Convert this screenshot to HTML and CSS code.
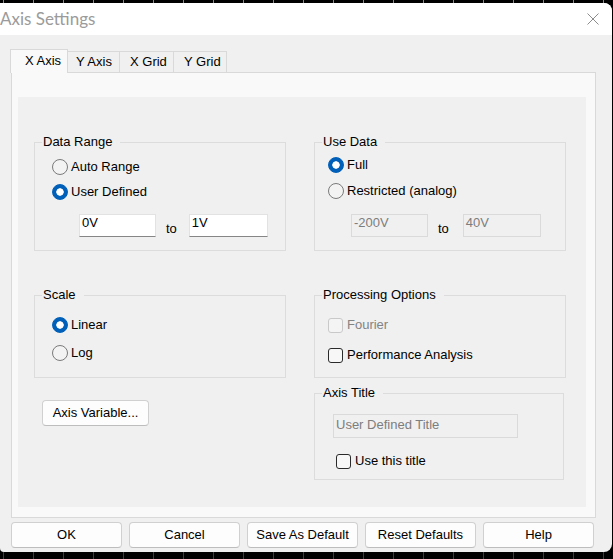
FILE: index.html
```html
<!DOCTYPE html>
<html lang="en">
<head>
<meta charset="utf-8">
<title>Axis Settings</title>
<link rel="stylesheet" href="styles.css">
</head>
<body>
<div class="desktop">
  <div class="window">
    <div class="titlebar">
      <span class="title">Axis Settings</span>
      <svg class="close" width="12" height="12" viewBox="0 0 12 12" aria-label="Close">
        <path d="M0.5 0.5 L11.5 11.5 M11.5 0.5 L0.5 11.5" stroke="#8c8c8c" stroke-width="1" fill="none"/>
      </svg>
    </div>
    <div class="client">
      <div class="tabs">
        <div class="tab tab-active tab-1">X Axis</div>
        <div class="tab tab-2">Y Axis</div>
        <div class="tab tab-3">X Grid</div>
        <div class="tab tab-4">Y Grid</div>
      </div>
      <div class="panel">
        <div class="page">
          <fieldset class="group group-range">
            <legend>Data Range</legend>
            <div class="opts">
              <div class="opt"><span class="radio"></span>Auto Range</div>
              <div class="opt"><span class="radio radio-on"></span>User Defined</div>
            </div>
            <div class="range">
              <div class="textbox tb-a">0V</div>
              <span class="to">to</span>
              <div class="textbox tb-b">1V</div>
            </div>
          </fieldset>

          <fieldset class="group group-use">
            <legend>Use Data</legend>
            <div class="opts">
              <div class="opt"><span class="radio radio-on"></span>Full</div>
              <div class="opt"><span class="radio"></span>Restricted (analog)</div>
            </div>
            <div class="range">
              <div class="textbox textbox-off tb-a">-200V</div>
              <span class="to">to</span>
              <div class="textbox textbox-off tb-b">40V</div>
            </div>
          </fieldset>

          <fieldset class="group group-scale">
            <legend>Scale</legend>
            <div class="opts">
              <div class="opt"><span class="radio radio-on"></span>Linear</div>
              <div class="opt"><span class="radio"></span>Log</div>
            </div>
          </fieldset>

          <fieldset class="group group-proc">
            <legend>Processing Options</legend>
            <div class="opts">
              <div class="opt opt-off"><span class="check check-off"></span>Fourier</div>
              <div class="opt"><span class="check"></span>Performance Analysis</div>
            </div>
          </fieldset>

          <button class="btn btn-axisvar" type="button">Axis Variable...</button>

          <fieldset class="group group-title">
            <legend>Axis Title</legend>
            <div class="textbox textbox-off tb-title">User Defined Title</div>
            <div class="opt opt-title"><span class="check"></span>Use this title</div>
          </fieldset>
        </div>
      </div>
      <div class="buttons">
        <button class="btn" type="button">OK</button>
        <button class="btn" type="button">Cancel</button>
        <button class="btn" type="button">Save As Default</button>
        <button class="btn" type="button">Reset Defaults</button>
        <button class="btn" type="button">Help</button>
      </div>
    </div>
  </div>
</div>
</body>
</html>
```

FILE: styles.css
```css
html, body {
  margin: 0;
  padding: 0;
  background: #000;
}

body {
  font-family: "Liberation Sans", Arial, sans-serif;
  font-size: 13px;
  color: #000;
}

.desktop {
  width: 613px;
  height: 559px;
  box-sizing: border-box;
  padding-top: 3px;
  overflow: hidden;
  background:
    linear-gradient(to right, transparent 3px, #8a8a8a 3px, #8a8a8a 4px, transparent 4px) 0 0 / 30px 3px repeat-x,
    linear-gradient(to right, transparent 3px, #3c3c3c 3px, #3c3c3c 4px, transparent 4px) 0 100% / 30px 7px repeat-x,
    #000;
}

.window {
  width: 612px;
  height: 549px;
  background: #f0f0f0;
  border-radius: 0 8px 8px 4px;
  overflow: hidden;
  display: flex;
  flex-direction: column;
}

/* title bar */
.titlebar {
  height: 32px;
  flex: none;
  background: #fff;
  display: flex;
  align-items: center;
  justify-content: space-between;
  padding-right: 13px;
}

.title {
  font-family: Lato, "Noto Sans", sans-serif;
  font-size: 17px;
  line-height: 20px;
  color: #9b9b9b;
}

.close {
  display: block;
}

/* client area */
.client {
  flex: 1;
  padding-top: 14px;
}

.tabs {
  display: flex;
  align-items: flex-end;
  height: 23px;
  margin-left: 11px;
}

.tab {
  height: 21px;
  box-sizing: border-box;
  border: 1px solid #d9d9d9;
  border-bottom: none;
  background: #f0f0f0;
  margin-left: -1px;
  display: flex;
  align-items: center;
  line-height: 16px;
  white-space: nowrap;
}

.tab-active {
  height: 24px;
  margin-bottom: -1px;
  padding-bottom: 1px;
  background: #f9f9f9;
  position: relative;
  z-index: 1;
}

.tab-1 { width: 58px; padding-left: 14px; }
.tab-2 { width: 53px; padding-left: 8px; }
.tab-3 { width: 55px; padding-left: 10px; }
.tab-4 { width: 54px; padding-left: 10px; }

.panel {
  margin-left: 11px;
  width: 585px;
  box-sizing: border-box;
  border: 1px solid #d9d9d9;
  background: #f9f9f9;
  padding: 24px 9px 10px 6px;
}

.page {
  height: 410px;
  box-sizing: border-box;
  background: #f0f0f0;
  padding: 37px 0 0 16px;
  display: grid;
  grid-template-columns: 252px 252px;
  column-gap: 28px;
  align-items: start;
  align-content: start;
}

/* group boxes */
.group {
  margin: 0;
  padding: 0;
  min-width: 0;
  box-sizing: border-box;
  border: 1px solid #dcdcdc;
}

.group legend {
  margin-left: 7px;
  padding: 0 8px 0 1px;
  line-height: 16px;
}

.group-range, .group-use { height: 117px; }
.group-scale, .group-proc { height: 91px; margin-top: 36px; }
.group-title { height: 95px; width: 250px; margin-top: 7px; }

.opts {
  display: flex;
  flex-direction: column;
}

.opt {
  display: flex;
  align-items: center;
  gap: 3px;
  height: 16px;
  line-height: 16px;
  white-space: nowrap;
}

.opt-off {
  color: #838383;
}

.group-range .opts { padding: 9px 0 0 17px; gap: 9px; }
.group-use .opts { padding: 7px 0 0 13px; gap: 10px; }
.group-scale .opts { padding: 14px 0 0 17px; gap: 12px; }
.group-proc .opts { padding: 14px 0 0 13px; gap: 14px; }
.group-proc .opt { gap: 4px; }

.radio {
  flex: none;
  width: 16px;
  height: 16px;
  box-sizing: border-box;
  border: 1px solid #7a7a7a;
  border-radius: 50%;
  background: #f3f3f3;
}

.radio-on {
  border-color: #005fb8;
  background: radial-gradient(circle, #fff 0, #fff 3.4px, #005fb8 4px);
}

.check {
  flex: none;
  width: 15px;
  height: 15px;
  box-sizing: border-box;
  border: 1px solid #2a2a2a;
  border-radius: 3px;
  background: #f7f7f7;
}

.check-off {
  border-color: #c9c9c9;
  background: #f4f4f4;
}

/* text fields */
.range {
  display: flex;
  align-items: flex-start;
  margin-top: 14px;
}

.group-range .range { margin-left: 44px; }
.group-use .range { margin-top: 15px; margin-left: 36px; }

.textbox {
  height: 23px;
  box-sizing: border-box;
  border: 1px solid #e2e2e2;
  border-bottom-color: #868686;
  background: #fff;
  padding: 0 2px;
  line-height: 16px;
  white-space: nowrap;
}

.textbox-off {
  background: #f0f0f0;
  border-color: #dadada;
  color: #7d7d7d;
}

.tb-a { width: 77px; }
.group-range .tb-b { width: 79px; margin-left: 12px; }
.group-use .tb-b { width: 78px; margin-left: 14px; }

.to {
  margin-left: 10px;
  margin-top: 7px;
  line-height: 16px;
}

.tb-title {
  width: 185px;
  height: 24px;
  padding-top: 2px;
  margin: 13px 0 0 18px;
}

.opt-title {
  gap: 4px;
  margin: 15px 0 0 21px;
}

/* buttons */
.btn {
  width: 111px;
  height: 26px;
  box-sizing: border-box;
  margin: 0;
  padding: 0;
  border: 1px solid #d0d0d0;
  border-bottom-color: #bdbdbd;
  border-radius: 4px;
  background: #fdfdfd;
  font-family: "Liberation Sans", Arial, sans-serif;
  font-size: 13px;
  color: #000;
  line-height: 16px;
}

.btn-axisvar {
  width: 107px;
  justify-self: start;
  margin: 22px 0 0 8px;
}

.buttons {
  display: flex;
  gap: 7px;
  margin: 4px 0 0 11px;
}
```
